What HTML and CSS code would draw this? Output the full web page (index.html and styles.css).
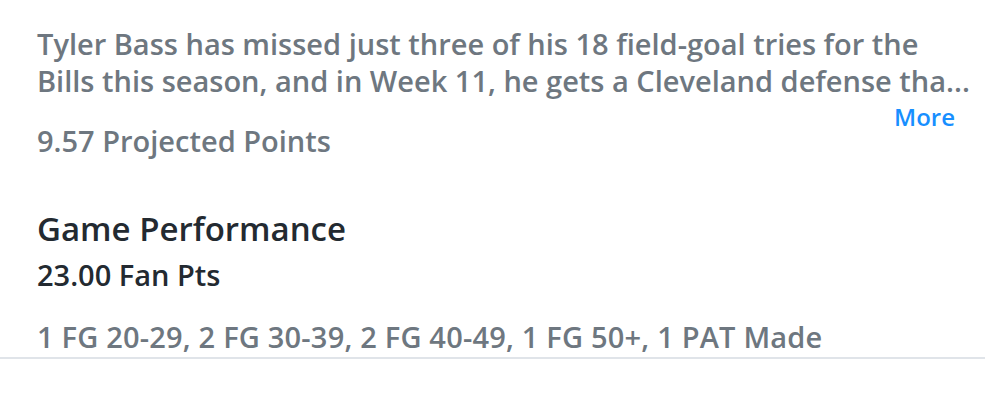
FILE: index.html
```html
<!DOCTYPE html>
<html lang="en">
<head>
    <meta charset="UTF-8">
    <meta name="viewport" content="width=device-width, initial-scale=1.0">
    <title>Player Note</title>
    <link rel="stylesheet" href="styles.css">
</head>
<body>
    <div class="player-card">
        <div class="note">
            <p class="note-text">Tyler Bass has missed just three of his 18 field-goal tries for the Bills this season, and in Week 11, he gets a Cleveland defense tha...</p>
            <a class="more-link" href="#">More</a>
            <p class="projected">9.57 Projected Points</p>
        </div>
        <div class="performance">
            <h2>Game Performance</h2>
            <p class="fan-pts">23.00 Fan Pts</p>
            <p class="stat-line">1 FG 20-29, 2 FG 30-39, 2 FG 40-49, 1 FG 50+, 1 PAT Made</p>
        </div>
    </div>
</body>
</html>
```

FILE: styles.css
```css
body {
    font-family: "Open Sans", "Noto Sans", sans-serif;
    margin: 0;
    padding: 0;
    background: #fff;
}

.player-card {
    padding: 25px 30px 2px 37px;
    border-bottom: 2px solid #e0e4e9;
}

.note {
    display: flex;
    flex-direction: column;
}

.note-text {
    margin: 0 -26px 0 0;
    font-size: 29px;
    font-weight: 600;
    line-height: 37px;
    color: #6e7780;
}

.more-link {
    align-self: flex-end;
    color: #188fff;
    text-decoration: none;
    font-size: 24px;
    font-weight: 600;
    line-height: 30px;
    margin-top: 3px;
}

.projected {
    margin: -10px 0 0 0;
    font-size: 29px;
    font-weight: 600;
    line-height: 37px;
    color: #6e7780;
}

.performance {
    padding-top: 50px;
}

.performance h2 {
    margin: 0;
    font-size: 33px;
    font-weight: 600;
    line-height: 40px;
    color: #232a31;
}

.fan-pts {
    margin: 8px 0 0 0;
    font-size: 29px;
    font-weight: 600;
    line-height: 36px;
    color: #232a31;
}

.stat-line {
    margin: 25px 0 0 0;
    font-size: 29px;
    font-weight: 600;
    line-height: 37px;
    letter-spacing: 0.2px;
    color: #6e7780;
}
```
